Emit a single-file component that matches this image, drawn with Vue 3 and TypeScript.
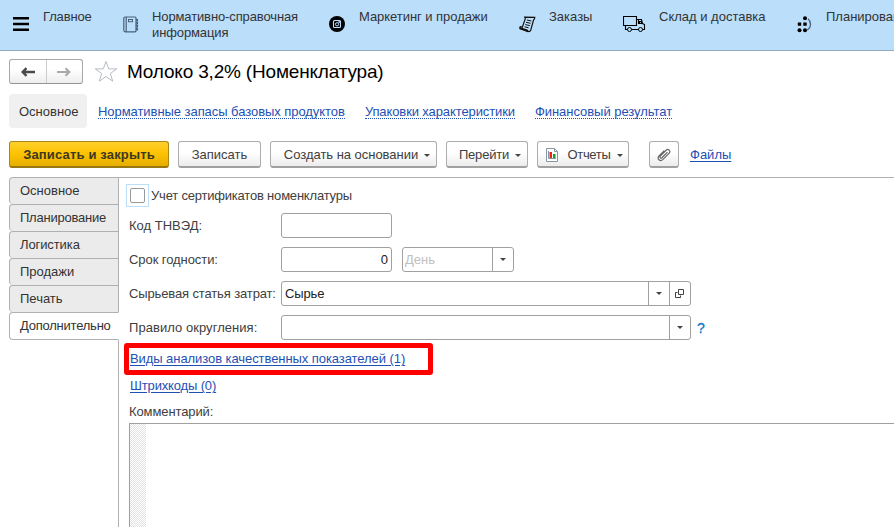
<script setup lang="ts">
import { ref } from 'vue'

interface Section {
  label: string
  icon: string
  cls: string
}

const sections: Section[] = [
  { label: 'Главное', icon: 'menu', cls: 's-main' },
  { label: 'Нормативно-справочная информация', icon: 'book', cls: 's-ref' },
  { label: 'Маркетинг и продажи', icon: 'camera', cls: 's-sales' },
  { label: 'Заказы', icon: 'scroll', cls: 's-orders' },
  { label: 'Склад и доставка', icon: 'truck', cls: 's-stock' },
  { label: 'Планирование', icon: 'plan', cls: 's-plan' },
]

const links = ['Нормативные запасы базовых продуктов', 'Упаковки характеристики', 'Финансовый результат']
const pages = ['Основное', 'Планирование', 'Логистика', 'Продажи', 'Печать', 'Дополнительно']
const activePage = ref('Дополнительно')
</script>

<template>
  <div class="window">
    <header class="sections">
      <div v-for="s in sections" :key="s.icon" class="section" :class="s.cls">
        <svg v-if="s.icon === 'menu'" class="ico" width="16" height="16" viewBox="0 0 16 16">
          <path d="M0 2.200h16M0 8h16M0 13.800h16" stroke="#000" stroke-width="2.500" />
        </svg>
        <svg v-else-if="s.icon === 'book'" class="ico" width="16" height="18" viewBox="0 0 16 18" fill="none" stroke="#46607a">
          <path d="M3.500 1h8.500q1 0 1 1v12.800q0 1-1 1H3.500M3.500 1H2.300Q.8 1 .8 2.500v11.800q0 1.500 1.500 1.500h1.200M3.200 1v15" stroke-width="1.200" />
          <rect x="5.500" y="3.500" width="4" height="2.200" />
          <path d="M13 3.500h1.500v1.500H13M13 6.500h1.500V8H13M13 9.500h1.500V11H13M13 12.500h1.500V14H13" stroke-width="1.100" />
        </svg>
        <svg v-else-if="s.icon === 'camera'" class="ico" width="16" height="16" viewBox="0 0 16 16">
          <circle cx="8" cy="8" r="8" fill="#000" />
          <rect x="4.500" y="4.500" width="7" height="7" rx="1" fill="none" stroke="#bbdefb" stroke-width="1.100" />
          <circle cx="8" cy="8.300" r="1.600" fill="none" stroke="#bbdefb" />
          <path d="M9.300 5.200h2v1.600h-2z" fill="#bbdefb" />
        </svg>
        <svg v-else-if="s.icon === 'scroll'" class="ico" width="17" height="17" viewBox="0 0 17 17" fill="none" stroke="#111">
          <path d="M5.700 1.100 15.800 1.300q0 2-1.300 2.800L11.800 14q-.8 2-2.600 1.500L1 12.700q-.6-1.500.4-2l1.900.5L6.300 2.600z" stroke-width="1.200" />
          <path d="m1 12 7 2.200 1.200 1.300Z" fill="#111" stroke-width="1.600" />
          <path d="m7.800 4 4.600 1M7 6.300l4.600 1M6.300 8.600l4.600 1M5.600 10.800l4 1" stroke-width="1" />
        </svg>
        <svg v-else-if="s.icon === 'truck'" class="ico" width="23" height="17" viewBox="0 0 23 17" fill="none" stroke="#000">
          <path d="M.5.500h13v9H.5zM2.500 9.500v4h2M8.500 13.500h7M13.500 3.500h5l1 4 2 1v5h-2M15.500 4v4M16.500 5.500h1.500l1 2h-2.500z" stroke-width="1.100" />
          <circle cx="6.500" cy="13.500" r="2" /><circle cx="17.500" cy="13.500" r="2" />
        </svg>
        <svg v-else class="ico" width="15" height="17" viewBox="0 0 15 17">
          <circle cx="8" cy="2.200" r="2" /><path d="M.8 6.500h3.400v3.200H.8zM6.300 6.500h3.400v3.200H6.300z" />
          <circle cx="2.500" cy="14.300" r="2" /><circle cx="8" cy="14.300" r="2" />
          <path d="M11 2.800q2.500 2 2.500 5.500 0 4-3.500 5.700" fill="none" stroke="#48627a" stroke-width="1.300" />
        </svg>
        <span class="section-label">{{ s.label }}</span>
      </div>
    </header>

    <div class="title-row">
      <div class="history">
        <button class="nav" type="button"><svg width="14" height="10" viewBox="0 0 14 10"><path d="M2 5H14M5.500 1.200 1.700 5l3.800 3.800" fill="none" stroke="#4a4a4a" stroke-width="2.400" /></svg></button>
        <button class="nav" type="button"><svg width="14" height="10" viewBox="0 0 14 10"><path d="M0 5h12M8.500 1.200 12.300 5 8.500 8.800" fill="none" stroke="#aaa" stroke-width="2.200" /></svg></button>
      </div>
      <svg class="star" width="24" height="23" viewBox="0 0 24 23"><path d="m12 1.500 2.700 7.400h8L16.300 13.500l2.400 7.700L12 16.500l-6.700 4.700 2.400-7.700L1.300 8.900h8z" fill="#fff" stroke="#b4bcc6" /></svg>
      <h1>Молоко 3,2% (Номенклатура)</h1>
    </div>

    <nav class="links">
      <span class="current">Основное</span>
      <a v-for="(l, i) in links" :key="l" :class="'link-' + i"><span>{{ l }}</span></a>
    </nav>

    <div class="commands">
      <button class="btn primary" type="button">Записать и закрыть</button>
      <button class="btn save" type="button">Записать</button>
      <button class="btn create" type="button"><span>Создать на основании</span><i class="caret" /></button>
      <button class="btn goto" type="button"><span>Перейти</span><i class="caret" /></button>
      <button class="btn reports" type="button">
        <svg width="12" height="14" viewBox="0 0 12 14"><path d="M.5.500h8l3 3v10H.5z" fill="#fff" stroke="#8796a5" /><path d="M8.500.500v3h3" fill="none" stroke="#8796a5" /><path d="M2.500 3v7.500H10" fill="none" stroke="#8796a5" /><path d="M3.500 4h2.500v6H3.500z" fill="#f22013" /><path d="M7 6h2.500v4H7z" fill="#14a02c" /></svg>
        <span>Отчеты</span><i class="caret" />
      </button>
      <button class="btn clip" type="button">
        <svg width="14" height="14" viewBox="0 0 14 14"><path d="M10.500 4.200 5 9.700q-1 .8-1.700.1t0-1.700l5.800-5.800q1.700-1.500 3.100-.2t0 3.100l-6.400 6.400q-2 1.800-3.800.2t0-3.900l5.300-5.300" fill="none" stroke="#666" stroke-width="1.200" /></svg>
      </button>
      <a class="files">Файлы</a>
    </div>

    <main class="body">
      <div class="pages">
        <div v-for="(p, i) in pages" :key="p" class="page" :class="['page-' + i, { active: p === activePage }]" @click="activePage = p"><span>{{ p }}</span></div>
        <div class="rest" />
      </div>
      <section class="form">
        <label class="check"><span class="focus"><span class="box" /></span><span class="check-text">Учет сертификатов номенклатуры</span></label>
        <div class="row"><span class="label l-code">Код ТНВЭД:</span><div class="field short" /></div>
        <div class="row">
          <span class="label l-term">Срок годности:</span><div class="field short number">0</div>
          <div class="field unit"><span class="value muted">День</span><span class="drop"><i class="caret small" /></span></div>
        </div>
        <div class="row">
          <span class="label l-cost">Сырьевая статья затрат:</span>
          <div class="field wide"><span class="value">Сырье</span><span class="drop"><i class="caret small" /></span>
            <span class="drop"><svg width="10" height="10" viewBox="0 0 10 10" fill="none" stroke="#444"><path d="M3.500.500h5v5h-5zM2.500 3.500h-2v5h5v-2" /></svg></span>
          </div>
        </div>
        <div class="row">
          <span class="label l-round">Правило округления:</span>
          <div class="field wide"><span class="value" /><span class="drop"><i class="caret small" /></span></div>
          <span class="help">?</span>
        </div>
        <div class="highlight"><a class="kinds">Виды анализов качественных показателей (1)</a></div>
        <a class="barcodes">Штрихкоды (0)</a>
        <span class="comment-label">Комментарий:</span>
        <div class="comment"><div class="gutter" /></div>
      </section>
    </main>
  </div>
</template>

<style>
body { margin: 0; overflow: hidden; background: #fff; }
</style>

<style scoped>
* { box-sizing: border-box; }
.window { width: 894px; height: 527px; overflow: hidden; display: flex; flex-direction: column; font: 13px/16px "Liberation Sans", Arial, sans-serif; color: #404040; background: #fff; }
.sections { height: 51px; flex: none; display: flex; background: #bbdefb; border-bottom: 1px solid #91abc1; color: #333; }
.section { display: flex; align-items: flex-start; flex: none; padding-top: 9px; }
.ico { flex: none; margin-top: 7px; }
.section-label { flex: 1; }
.s-main { width: 109px; padding-left: 13px; }
.s-main .section-label { margin-left: 14px; letter-spacing: -.15px; }
.s-ref { width: 207px; padding-left: 14px; }
.s-ref .section-label { margin-left: 13px; letter-spacing: -.12px; }
.s-sales { width: 190px; padding-left: 13px; }
.s-sales .section-label { margin-left: 14px; letter-spacing: -.05px; }
.s-orders { width: 104px; padding-left: 13px; }
.s-orders .section-label { margin-left: 13px; }
.s-stock { width: 174px; padding-left: 13px; }
.s-stock .section-label { margin-left: 13px; }
.s-plan { width: 130px; padding-left: 13px; }
.s-plan .section-label { margin-left: 14px; }

.title-row { height: 43px; flex: none; display: flex; align-items: flex-start; padding: 8px 0 0 9px; }
.history { width: 74px; height: 25px; display: flex; border: 1px solid #a8a8a8; border-radius: 3px; border-bottom-color: #949494; background: linear-gradient(#fff 40%, #ededed); }
.nav { flex: 1; padding: 0; border: 0; background: none; display: flex; align-items: center; justify-content: center; }
.nav + .nav { border-left: 1px solid #ccc; }
.star { margin: 1px 0 0 11px; }
h1 { margin: 2px 0 0 9px; font-size: 19px; line-height: 22px; font-weight: 400; letter-spacing: -.18px; color: #000; white-space: nowrap; }

.links { height: 34px; flex: none; display: flex; align-items: center; padding-left: 9px; white-space: nowrap; }
.current { width: 78px; height: 34px; padding-left: 10px; line-height: 35px; background: #f0f0f0; border-radius: 4px; margin-right: 11px; color: #333; }
a { color: #1e50b4; }
.links a { margin-right: 20px; height: 16px; }
.links a span { display: block; height: 16px; line-height: 18px; border-bottom: 1px dotted #1e50b4; }
.link-0 { letter-spacing: -.055px; }
.link-1 { letter-spacing: -.11px; }
.link-2 { letter-spacing: -.04px; }

.commands { height: 49px; flex: none; display: flex; align-items: flex-start; padding: 13px 0 0 9px; white-space: nowrap; }
.btn { height: 27px; padding: 1px 0 0; display: flex; align-items: center; justify-content: center; font: inherit; color: #404040; border: 1px solid #adadad; border-bottom: 2px solid #a0a0a0; border-radius: 3px; background: linear-gradient(#fff 45%, #ececec); margin-right: 9px; }
.primary { width: 160px; font-weight: 700; letter-spacing: .16px; background: linear-gradient(#ffd02e, #fcc200 50%, #e6ae00); border-color: #a8861c; border-bottom-color: #98770e; color: #3d3820; }
.save { width: 83px; }
.create { width: 167px; padding-left: 7px; letter-spacing: -.03px; }
.goto { width: 82px; padding-left: 6px; letter-spacing: -.2px; }
.reports { width: 92px; padding-left: 3px; letter-spacing: -.3px; }
.reports svg { margin-right: 9px; }
.clip { width: 30px; margin: 0 11px; }
.caret { width: 0; height: 0; flex: none; border: 3px solid transparent; border-top: 3px solid #444; border-bottom: 0; margin: 2px 0 0 6px; }
.caret.small { margin: 0; }
.files { margin-top: 6px; }
.files, .highlight a, .barcodes { text-decoration: underline; text-underline-offset: 1.500px; text-decoration-thickness: 1px; }

.body { flex: 1; display: flex; min-height: 0; }
.pages { width: 119px; display: flex; flex-direction: column; flex: none; padding-left: 9px; }
.page { height: 27px; flex: none; padding: 5px 0 0 10px; background: #ebebeb; border: solid #b0b0b0; border-width: 1px 1px 0 1px; border-radius: 4px 0 0 4px; color: #333; white-space: nowrap; width: 110px; line-height: 15px; }
.page-1, .page-5 { letter-spacing: -.23px; }
.page-2 { letter-spacing: -.1px; }
.page.active { background: #fff; height: 28px; border-right-color: transparent; border-bottom-width: 1px; }
.rest { flex: 1; width: 110px; border-right: 1px solid #b0b0b0; }
.form { flex: 1; border-top: 1px solid #b0b0b0; padding-left: 10px; display: flex; flex-direction: column; align-items: flex-start; min-width: 0; white-space: nowrap; }
.check { display: flex; align-items: center; height: 23px; margin: 6px 0 6px -3px; letter-spacing: -.2px; }
.focus { width: 23px; height: 23px; border: 1px solid #bbdefb; padding: 3px; margin-right: 2px; }
.box { display: block; width: 15px; height: 15px; border: 1px solid #999; border-radius: 2px; }
.row { display: flex; height: 25px; margin-bottom: 9px; align-items: center; }
.label { width: 152px; }
.l-term { letter-spacing: -.07px; }
.l-cost { letter-spacing: -.13px; }
.l-round { letter-spacing: .05px; }
.field { height: 25px; border: 1px solid #a0a0a0; border-radius: 3px; display: flex; align-items: center; color: #222; }
.short { width: 111px; }
.number { justify-content: flex-end; padding-right: 3px; margin-right: 10px; }
.unit { width: 112px; }
.wide { width: 410px; }
.value { flex: 1; padding-left: 3px; letter-spacing: -.15px; }
.muted { padding-left: 2px; color: #c0c0c0; letter-spacing: 0; }
.drop { width: 21px; height: 23px; border-left: 1px solid #a0a0a0; display: flex; align-items: center; justify-content: center; }
.help { margin-left: 6px; font-size: 14px; color: #0a7ac8; -webkit-text-stroke: .3px #0a7ac8; }
.highlight { width: 309px; height: 32px; border: 5px solid #f00; border-radius: 3px; margin: -6px 0 3px -5px; padding: 3px 0 0 1px; letter-spacing: -.07px; }
.barcodes { margin-left: 1px; letter-spacing: -.15px; }
.comment-label { margin: 10px 0 3px; letter-spacing: -.1px; }
.comment { flex: 1; align-self: stretch; border: solid #a0a0a0; border-width: 1px 0 0 1px; display: flex; }
.gutter { width: 16px; background: conic-gradient(#e2e2e2 25%, #fff 0 50%, #e2e2e2 0 75%, #fff 0) 0 0 / 2px 2px; }
</style>
